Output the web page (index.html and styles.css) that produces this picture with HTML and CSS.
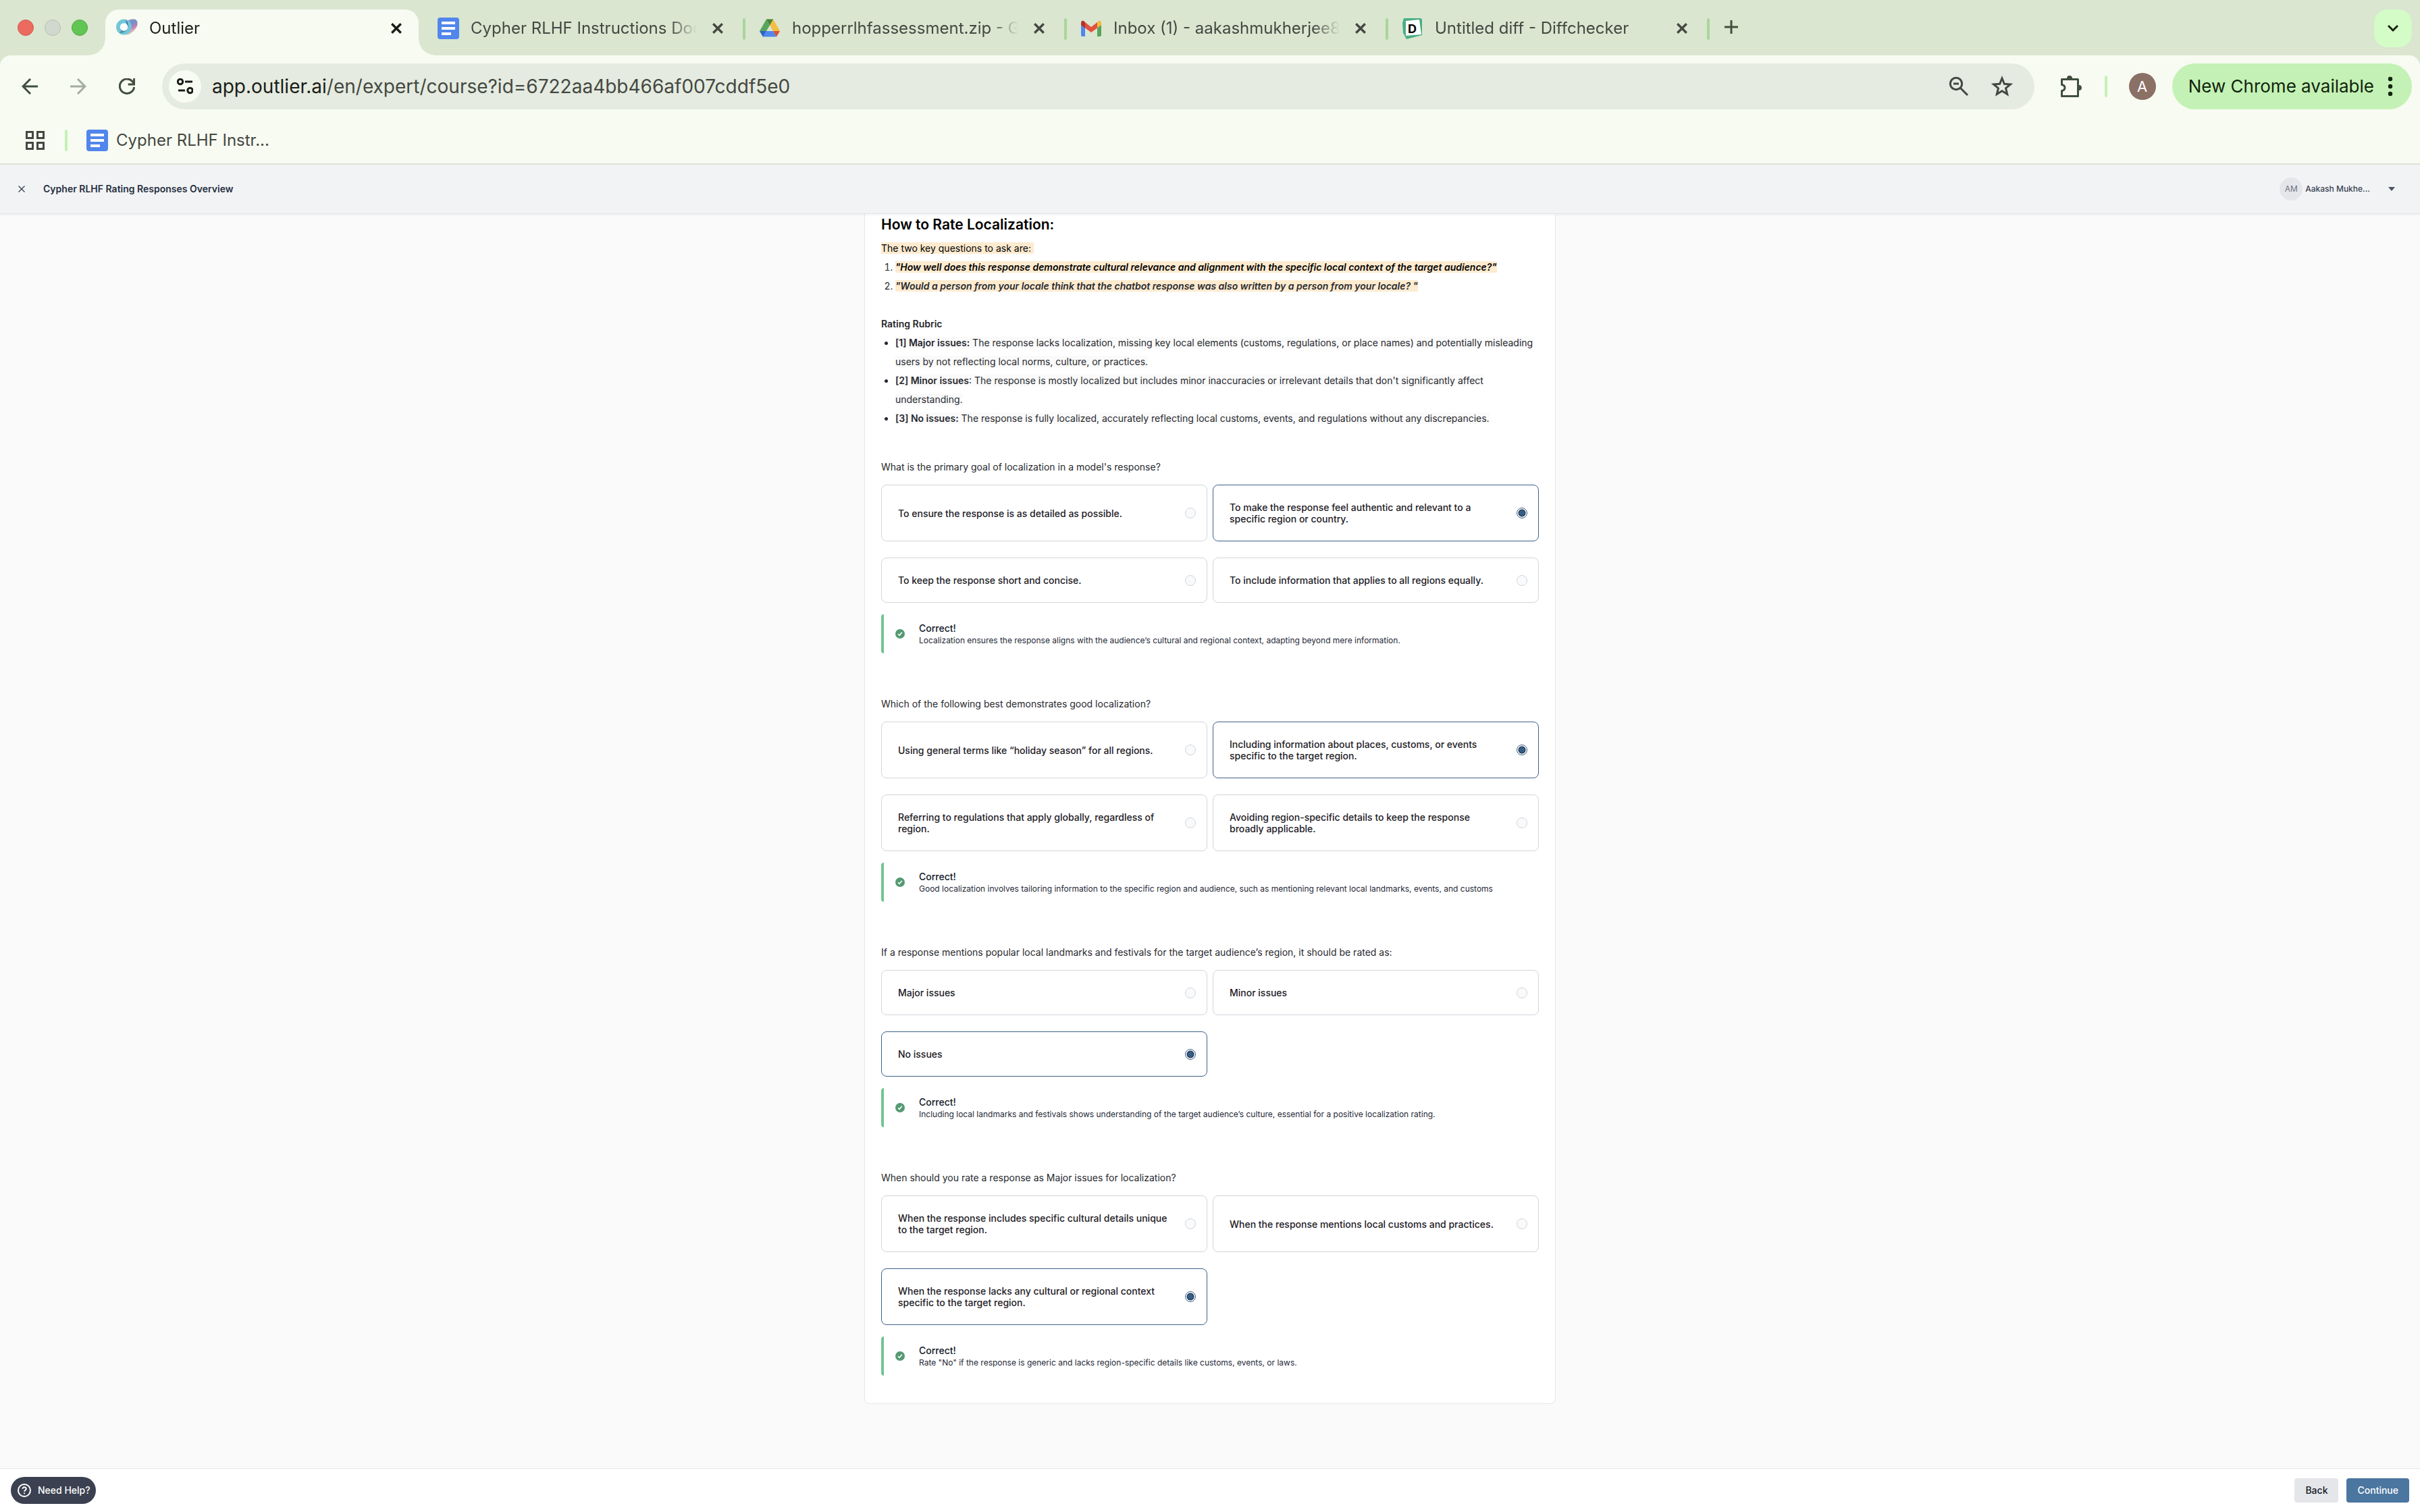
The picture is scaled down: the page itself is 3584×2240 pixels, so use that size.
FILE: index.html
```html
<!DOCTYPE html>
<html lang="en">
<head>
<meta charset="utf-8">
<title>Outlier</title>
<link rel="stylesheet" href="styles.css">
</head>
<body>
<header class="browser">
  <div class="tabstrip">
    <div class="lights"><span class="light red"></span><span class="light grey"></span><span class="light green"></span></div>
    <div class="tab active">
      <svg class="favicon" viewBox="0 0 32 32"><defs><linearGradient id="lobe" x1="0" y1="0" x2="0.3" y2="1"><stop offset="0" stop-color="#b49ac8"/><stop offset=".35" stop-color="#6f8fc8"/><stop offset=".65" stop-color="#c77fb4"/><stop offset="1" stop-color="#f3d9c4"/></linearGradient><linearGradient id="ring" x1="0.7" y1="0" x2="0.4" y2="1"><stop offset="0" stop-color="#3b649c"/><stop offset="1" stop-color="#4f93a0"/></linearGradient></defs><path d="M14 7c4-4 11-6 15-4 4 3 3 9 0 13-3 5-8 9-13 10z" fill="url(#lobe)"/><circle cx="11.500" cy="14" r="11.500" fill="#72c6da"/><path d="M14 3a11.500 11.500 0 0 1-9 20l4-6 8-4z" fill="url(#ring)"/><circle cx="11.500" cy="14" r="5.800" fill="#fff"/></svg>
      <span class="tab-title">Outlier</span>
      <button class="close" aria-label="Close tab"><svg viewBox="0 0 16 16"><path d="M2 2l12 12M14 2L2 14"/></svg></button>
    </div>
    <div class="tab">
      <svg class="favicon" viewBox="0 0 32 32"><rect width="32" height="32" rx="4" fill="#5186ec"/><path d="M6 6h20v4H6zM6 14h20v4H6zM6 22h14v4H6z" fill="#fff"/></svg>
      <span class="tab-title">Cypher RLHF Instructions Doc</span>
      <button class="close" aria-label="Close tab"><svg viewBox="0 0 16 16"><path d="M2 2l12 12M14 2L2 14"/></svg></button>
    </div>
    <div class="tab">
      <svg class="favicon" viewBox="0 0 32 32"><path d="M11 2.500L1 20l5 8.500L16 11.500z" fill="#57a55c"/><path d="M11 2.500h10l10 17.500H21z" fill="#f5bd41"/><path d="M11 2.500h10l-5 9z" fill="#3f8440"/><path d="M1 20h10l-5 8.500z" fill="#2c63c9"/><path d="M21 20h10l-5 8.500z" fill="#dd4f34"/><path d="M11 20h10l5 8.500H6z" fill="#5186ec"/></svg>
      <span class="tab-title">hopperrlhfassessment.zip - G</span>
      <button class="close" aria-label="Close tab"><svg viewBox="0 0 16 16"><path d="M2 2l12 12M14 2L2 14"/></svg></button>
    </div>
    <div class="tab">
      <svg class="favicon" viewBox="0 0 32 32"><path d="M1 10l6 4v14H3a2 2 0 0 1-2-2z" fill="#5186ec"/><path d="M25 14l6-4v16a2 2 0 0 1-2 2h-4z" fill="#57a55c"/><path d="M25 7l2-2c2-1 4 0 4 3v3l-6 4.500z" fill="#f5bd41"/><path d="M1 8c0-3 2-4 4-3l2 2v8.500L1 11z" fill="#b5322a"/><path d="M7 7l9 7 9-7v8.500L16 22l-9-6.500z" fill="#e2523d"/></svg>
      <span class="tab-title">Inbox (1) - aakashmukherjee8</span>
      <button class="close" aria-label="Close tab"><svg viewBox="0 0 16 16"><path d="M2 2l12 12M14 2L2 14"/></svg></button>
    </div>
    <div class="tab">
      <svg class="favicon" viewBox="0 0 32 32"><path d="M3 1h24a3 3 0 0 1 3 3v22L7 32l-5-9L1 8z" fill="#4aae83"/><path d="M6 5l20-2 3 22-23 2z" fill="#fff"/><text x="9" y="23" class="d-mark">D</text></svg>
      <span class="tab-title">Untitled diff - Diffchecker</span>
      <button class="close" aria-label="Close tab"><svg viewBox="0 0 16 16"><path d="M2 2l12 12M14 2L2 14"/></svg></button>
    </div>
    <button class="new-tab" aria-label="New tab"><svg viewBox="0 0 20 20"><path d="M10 0v20M0 10h20"/></svg></button>
    <button class="tab-search" aria-label="Search tabs"><svg viewBox="0 0 16 16"><path d="M1 4l7 7 7-7"/></svg></button>
  </div>
  <div class="toolbar">
    <div class="nav">
      <button aria-label="Back"><svg viewBox="0 0 24 24"><path d="M24 12H2M13 1L2 12l11 11"/></svg></button>
      <button class="off" aria-label="Forward"><svg viewBox="0 0 24 24"><path d="M0 12h22M11 1l11 11-11 11"/></svg></button>
      <button aria-label="Reload"><svg viewBox="0 0 24 24"><path d="M22.700 13A10.700 10.700 0 1 1 20 4.500l2.700 4M22.700 0v9h-9"/></svg></button>
    </div>
    <div class="omnibox">
      <button class="site-info" aria-label="Site information"><svg viewBox="0 0 24 24"><circle cx="5" cy="5" r="3.700"/><path d="M12 5h11M2 18h10"/><circle cx="19.500" cy="18" r="3.700"/></svg></button>
      <label class="url"><span class="host">app.outlier.ai</span><input type="text" value="/en/expert/course?id=6722aa4bb466af007cddf5e0" aria-label="Address"></label>
      <button class="omni-btn" aria-label="Zoom"><svg viewBox="0 0 32 32"><circle cx="12" cy="12" r="8.700"/><path d="M8 12h8M18 18l11 11"/></svg></button>
      <button class="omni-btn" aria-label="Bookmark"><svg viewBox="0 0 32 32"><path d="M16 4l3.400 8.300 9 .7-6.900 5.700 2.200 8.800L16 22.700l-7.700 4.800 2.200-8.800L3.600 13l9-.7z"/></svg></button>
    </div>
    <button class="puzzle" aria-label="Extensions"><svg viewBox="0 0 32 32"><path d="M2.500 5.500h24v25h-24v-8c6-1 6-8 0-9v-8z" fill="none" stroke-width="3" stroke-linejoin="round"/><path d="M10 4a4 4 0 0 1 8 0zM28 14a4 4 0 0 1 0 8z" stroke="none" class="solid"/></svg></button>
    <span class="divider"></span>
    <button class="avatar" aria-label="Profile">A</button>
    <button class="update">New Chrome available<svg viewBox="0 0 8 32"><circle cx="4" cy="5" r="3.200"/><circle cx="4" cy="16" r="3.200"/><circle cx="4" cy="27" r="3.200"/></svg></button>
  </div>
  <nav class="bookmarks">
    <button class="apps" aria-label="Apps"><svg viewBox="0 0 28 28"><path d="M1.500 1.500h9v9h-9zM17.500 1.500h9v9h-9zM1.500 17.500h9v9h-9zM17.500 17.500h9v9h-9z"/></svg></button>
    <span class="divider"></span>
    <a href="#" class="bookmark"><svg class="favicon" viewBox="0 0 32 32"><rect width="32" height="32" rx="4" fill="#5186ec"/><path d="M6 6h20v4H6zM6 14h20v4H6zM6 22h14v4H6z" fill="#fff"/></svg>Cypher RLHF Instr...</a>
  </nav>
</header>

<div class="course-bar">
  <button class="exit" aria-label="Exit course"><svg viewBox="0 0 10 10"><path d="M.5.5l9 9M9.500.5l-9 9"/></svg></button>
  <h1>Cypher RLHF Rating Responses Overview</h1>
  <button class="account"><span class="initials">AM</span><span class="name">Aakash Mukhe...</span><svg viewBox="0 0 10 6"><path d="M0 0h10L5 6z"/></svg></button>
</div>

<main>
  <article class="card">
    <section class="lesson">
      <h2>How to Rate Localization:</h2>
      <p><mark>The two key questions to ask are:&nbsp;</mark></p>
      <ol>
        <li><mark class="strong">"How well does this response demonstrate cultural relevance and alignment with the specific local context of the target audience?"</mark></li>
        <li><mark class="strong soft">"Would a person from your locale think that the chatbot response was also written by a person from your locale? "</mark></li>
      </ol>
      <h3>Rating Rubric</h3>
      <ul>
        <li><span class="tint"><b>[1] Major issues:</b> The response lacks localization, missing key local elements (customs, regulations, or place names) and potentially misleading users by not reflecting local norms, culture, or practices.</span></li>
        <li><span class="tint"><b>[2] Minor issues</b>: The response is mostly localized but includes minor inaccuracies or irrelevant details that don't significantly affect understanding.</span></li>
        <li><span class="tint"><b>[3] No issues:</b> The response is fully localized, accurately reflecting local customs, events, and regulations without any discrepancies.</span></li>
      </ul>
    </section>

    <fieldset class="question">
      <legend>What is the primary goal of localization in a model's response?</legend>
      <div class="options">
        <label class="option"><span>To ensure the response is as detailed as possible.</span><input type="radio" name="q1"></label>
        <label class="option"><span>To make the response feel authentic and relevant to a specific region or country.</span><input type="radio" name="q1" checked></label>
        <label class="option"><span>To keep the response short and concise.</span><input type="radio" name="q1"></label>
        <label class="option"><span>To include information that applies to all regions equally.</span><input type="radio" name="q1"></label>
      </div>
      <div class="feedback">
        <svg viewBox="0 0 14 14"><circle cx="7" cy="7" r="7"/><path d="M4 7.300l2 2 3.800-4.600"/></svg>
        <div><h4>Correct!</h4><p>Localization ensures the response aligns with the audience’s cultural and regional context, adapting beyond mere information.</p></div>
      </div>
    </fieldset>

    <fieldset class="question">
      <legend>Which of the following best demonstrates good localization?</legend>
      <div class="options">
        <label class="option"><span>Using general terms like “holiday season” for all regions.</span><input type="radio" name="q2"></label>
        <label class="option"><span>Including information about places, customs, or events specific to the target region.</span><input type="radio" name="q2" checked></label>
        <label class="option"><span>Referring to regulations that apply globally, regardless of region.</span><input type="radio" name="q2"></label>
        <label class="option"><span>Avoiding region-specific details to keep the response broadly applicable.</span><input type="radio" name="q2"></label>
      </div>
      <div class="feedback">
        <svg viewBox="0 0 14 14"><circle cx="7" cy="7" r="7"/><path d="M4 7.300l2 2 3.800-4.600"/></svg>
        <div><h4>Correct!</h4><p>Good localization involves tailoring information to the specific region and audience, such as mentioning relevant local landmarks, events, and customs</p></div>
      </div>
    </fieldset>

    <fieldset class="question">
      <legend>If a response mentions popular local landmarks and festivals for the target audience’s region, it should be rated as:</legend>
      <div class="options">
        <label class="option"><span>Major issues</span><input type="radio" name="q3"></label>
        <label class="option"><span>Minor issues</span><input type="radio" name="q3"></label>
        <label class="option"><span>No issues</span><input type="radio" name="q3" checked></label>
      </div>
      <div class="feedback">
        <svg viewBox="0 0 14 14"><circle cx="7" cy="7" r="7"/><path d="M4 7.300l2 2 3.800-4.600"/></svg>
        <div><h4>Correct!</h4><p>Including local landmarks and festivals shows understanding of the target audience’s culture, essential for a positive localization rating.</p></div>
      </div>
    </fieldset>

    <fieldset class="question">
      <legend>When should you rate a response as Major issues for localization?</legend>
      <div class="options">
        <label class="option"><span>When the response includes specific cultural details unique to the target region.</span><input type="radio" name="q4"></label>
        <label class="option"><span>When the response mentions local customs and practices.</span><input type="radio" name="q4"></label>
        <label class="option"><span>When the response lacks any cultural or regional context specific to the target region.</span><input type="radio" name="q4" checked></label>
      </div>
      <div class="feedback">
        <svg viewBox="0 0 14 14"><circle cx="7" cy="7" r="7"/><path d="M4 7.300l2 2 3.800-4.600"/></svg>
        <div><h4>Correct!</h4><p>Rate "No" if the response is generic and lacks region-specific details like customs, events, or laws.</p></div>
      </div>
    </fieldset>
  </article>
</main>

<footer class="actions">
  <button class="help"><svg viewBox="0 0 20 20"><circle cx="10" cy="10" r="9"/><path d="M7.300 7.800c0-3.300 5.400-3.200 5.400 0 0 1.900-2.700 2-2.700 4"/><path d="M10 13.400v1.800"/></svg>Need Help?</button>
  <button class="btn back">Back</button>
  <button class="btn continue">Continue</button>
</footer>
</body>
</html>
```
FILE: styles.css
```css
* { box-sizing: border-box; }

body {
  margin: 0;
  min-height: 100vh;
  display: flex;
  flex-direction: column;
  background: #fafafa;
  color: #27292e;
  font: 14px/28px Inter, "Liberation Sans", sans-serif;
}

h1, h2, h3, h4, p, ol, ul { margin: 0; padding: 0; }
button { border: 0; padding: 0; background: none; font: inherit; color: inherit; }
svg { display: block; flex: none; }

/* Browser chrome */
.browser { background: #dae6d0; font-size: 24px; color: #444842; border-bottom: 2px solid #dfe4d8; }
.tabstrip { display: flex; align-items: flex-start; height: 82px; padding: 0 12px 0 26px; }
.lights { display: flex; gap: 16px; width: 124px; padding-top: 29px; flex: none; }
.light { width: 24px; height: 24px; border-radius: 50%; border: 1px solid; }
.red { background: #ec6a5e; border-color: #d3564b; }
.grey { background: #d1d8cd; border-color: #b7beb3; }
.green { background: #61c554; border-color: #4fa73e; }

.tab {
  position: relative;
  display: flex;
  align-items: center;
  flex: 0 1 476px;
  min-width: 0;
  height: 56px;
  margin-top: 14px;
  padding: 0 30px 0 22px;
}
.tab::after { content: ""; position: absolute; right: -2px; top: 13px; width: 4px; height: 32px; border-radius: 2px; background: #a8d69c; }
.tab.active { height: 68px; flex-basis: 464px; margin: 14px 6px 0; padding: 0 24px 12px 16px; background: #f8fbf2; border-radius: 20px 20px 0 0; color: #1a1c18; }
.tab.active::before, .tab.active::after { content: ""; position: absolute; top: auto; bottom: 0; width: 24px; height: 24px; border-radius: 0; }
.tab.active::before { left: -24px; background: radial-gradient(circle at 0 0, transparent 23px, #f8fbf2 24px); }
.tab.active::after { right: -24px; background: radial-gradient(circle at 100% 0, transparent 23px, #f8fbf2 24px); }
.favicon { width: 32px; height: 32px; }
.d-mark { font: bold 18px Inter, sans-serif; fill: #000; }
.tab-title { flex: 1; min-width: 0; margin: 0 22px 0 17px; overflow: hidden; white-space: nowrap; -webkit-mask-image: linear-gradient(to right, #000 calc(100% - 40px), transparent); mask-image: linear-gradient(to right, #000 calc(100% - 40px), transparent); }
.close svg { width: 18px; height: 18px; }
.close svg, .new-tab svg, .tab-search svg, .nav svg { fill: none; stroke: currentColor; stroke-width: 3; }
.new-tab { margin: 30px 0 0 24px; color: #414f3d; }
.new-tab svg { width: 20px; height: 20px; }
.tab-search { display: grid; place-items: center; width: 56px; height: 56px; margin: 14px 0 0 auto; border-radius: 20px; background: #d3fcc7; color: #17210f; }
.tab-search svg { width: 16px; height: 16px; }

.toolbar { display: flex; align-items: center; height: 92px; padding: 0 12px 0 32px; background: #f8fbf2; border-radius: 16px 16px 0 0; color: #414f3d; }
.nav { display: flex; gap: 48px; width: 208px; flex: none; }
.nav svg { width: 24px; height: 24px; }
.off { opacity: .45; }
.omnibox { display: flex; align-items: center; flex: 1; height: 68px; padding: 0 32px 0 10px; border-radius: 34px; background: #e5ebe0; color: #444842; }
.site-info { display: grid; place-items: center; width: 48px; height: 48px; border-radius: 50%; background: #f8fbf2; color: #1a1c18; }
.site-info svg { width: 24px; height: 24px; fill: none; stroke: currentColor; stroke-width: 3; }
.url { display: flex; flex: 1; margin-left: 16px; font-size: 28px; line-height: 40px; }
.host { color: #1a1c18; }
.url input { flex: 1; min-width: 0; border: 0; padding: 0; background: none; font: inherit; color: inherit; outline: 0; }
.omni-btn svg { width: 32px; height: 32px; fill: none; stroke: currentColor; stroke-width: 3; }
.omni-btn + .omni-btn { margin-left: 32px; }
.puzzle { margin-left: 38px; }
.puzzle svg { width: 32px; height: 32px; stroke: currentColor; }
.solid { fill: #414f3d; }
.divider { width: 4px; height: 32px; border-radius: 2px; background: #c4f1b5; }
.toolbar .divider { margin: 0 32px 0 34px; }
.avatar { width: 40px; height: 40px; border-radius: 50%; background: #8b7066; color: #fff; font-size: 22px; }
.update { display: flex; align-items: center; height: 68px; margin-left: 24px; padding: 0 28px 0 24px; gap: 20px; border-radius: 34px; background: #c4f1b5; color: #10240c; font-size: 26px; }
.update svg { width: 8px; height: 32px; fill: currentColor; }

.bookmarks { display: flex; align-items: center; height: 68px; padding-left: 38px; background: #f8fbf2; }
.apps svg { width: 28px; height: 28px; fill: none; stroke: currentColor; stroke-width: 3; }
.bookmarks .divider { margin: 0 28px 0 30px; }
.bookmark { display: flex; align-items: center; gap: 12px; color: inherit; text-decoration: none; }

/* Course header */
.course-bar { position: relative; display: flex; align-items: center; height: 73px; padding: 0 37px 0 27px; background: #f2f3f5; border-bottom: 1px solid #e2e3e9; box-shadow: 0 1px 4px rgba(0, 0, 0, .06); }
.exit svg { width: 10px; height: 10px; fill: none; stroke: #374151; stroke-width: 1.300; }
h1 { margin-left: 27px; font-size: 14px; font-weight: 600; color: #252f3f; }
.account { display: flex; align-items: center; margin-left: auto; font-size: 12px; font-weight: 500; color: #374151; }
.initials { width: 34px; height: 34px; margin-right: 4px; border-radius: 50%; background: #e5e6ea; color: #6b7280; line-height: 34px; font-weight: 400; }
.account svg { width: 10px; height: 6px; margin-left: 27px; fill: #4b5563; }

/* Lesson card */
main { flex: 1; padding: 0 24px; }
.card { max-width: 1024px; margin: 0 auto; padding: 0 24px 41px; background: #fff; border: 1px solid #e5e7eb; border-top: 0; border-radius: 0 0 8px 8px; }
h2 { padding-top: 2px; font-size: 21px; line-height: 28px; font-weight: 600; color: #000; }
.lesson { padding-bottom: 44px; }
.lesson p { padding-top: 7px; }
mark { background: #fdebd0; color: #000; }
.strong { font-weight: 600; font-style: italic; }
.soft { color: #27292e; }
.lesson ol, .lesson ul { padding-left: 21px; }
h3 { margin-top: 28px; font-size: 14px; font-weight: 600; }
b { font-weight: 600; }
.tint { background: #fafafa; }

.question { min-width: 0; margin: 0 0 61px; padding: 0; border: 0; }
.question:last-child { margin-bottom: 0; }
legend { padding: 0; margin-bottom: 12px; }
.options { display: grid; grid-template-columns: 1fr 1fr; gap: 24px 8px; }
.option { display: flex; align-items: center; justify-content: space-between; gap: 24px; padding: 24px 16px 24px 24px; border: 1px solid #d1d5db; border-radius: 8px; background: #fff; color: #1d2026; font-weight: 500; line-height: 17px; }
.option:has(:checked) { border-color: #3b6289; }
.option input { appearance: none; flex: none; width: 16px; height: 16px; margin: 0; border: 1px solid #d1d5db; border-radius: 50%; background: #f9fafb; }
.option input:checked { border-color: #3b6289; background: radial-gradient(circle, #355f8a 3px, #2c3e52 5px, #fff 6px); }
.feedback { display: flex; align-items: center; gap: 21px; height: 58px; margin-top: 17px; padding-left: 17px; border-left: 4px solid #72c492; border-radius: 4px 0 0 4px; color: #1f2937; }
.feedback svg { width: 14px; height: 14px; fill: #559a73; }
.feedback path { fill: none; stroke: #fff; stroke-width: 1.500; }
.feedback h4 { font-size: 14px; font-weight: 500; line-height: 20px; color: #111827; }
.feedback p { font-size: 12px; line-height: 16px; }

/* Bottom bar */
.actions { display: flex; align-items: center; height: 65px; padding: 0 16px; gap: 12px; background: #fff; border-top: 1px solid #e5e7eb; font-weight: 500; }
.help { display: flex; align-items: center; gap: 10px; height: 40px; margin-right: auto; padding: 0 8px 0 10px; border-radius: 20px; background: #3b4151; color: #fff; }
.help svg { width: 20px; height: 20px; fill: none; stroke: currentColor; stroke-width: 2; }
.btn { height: 36px; padding: 0 16px; border-radius: 4px; }
.back { background: #e5e6ea; color: #111827; }
.continue { background: #4a76a0; color: #fff; }
```
